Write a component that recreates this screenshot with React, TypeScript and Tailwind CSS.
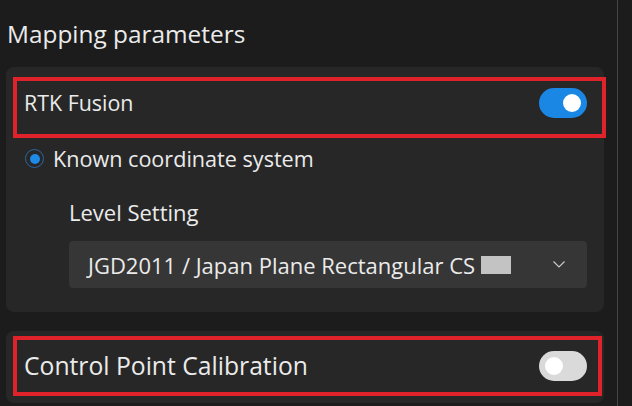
import { useState } from "react";

function Toggle({ on }: { on: boolean }) {
    return (
        <div
            className={`w-[48px] h-[30px] rounded-full flex items-center px-[6px] ${
                on ? "bg-[#1b87e5] justify-end" : "bg-[#dadada] justify-start"
            }`}
        >
            <div className="w-[18px] h-[18px] rounded-full bg-white" />
        </div>
    );
}

function App() {
    const [rtk] = useState(true);
    const [calibration] = useState(false);

    return (
        <div
            className="w-[632px] h-[406px] overflow-hidden bg-[#1c1c1c] text-[#ebebeb]"
            style={{ fontFamily: '"Open Sans", "Noto Sans", sans-serif' }}
        >
            {/* Panel */}
            <div className="w-[618px] h-[430px] -mt-[10px] pt-[10px] border-r border-t border-[#454545] rounded-tr-[12px] pl-[6px]">
                {/* Title */}
                <div className="h-[32px] mt-[17px] pl-[1px] text-[24.4px] leading-[32px]">Mapping parameters</div>

                {/* Card 1 */}
                <div className="mt-[17px] w-[598px] h-[245px] bg-[#272727] rounded-[8px] pt-[10px]">
                    <div className="ml-[7px] w-[593px] h-[61px] border-4 border-[#e0232b] flex items-center justify-between pb-[9px] pl-[7px] pr-[15px]">
                        <span className="text-[21.4px] leading-[30px]">RTK Fusion</span>
                        <Toggle on={rtk} />
                    </div>

                    {/* Radio */}
                    <div className="mt-[6px] h-[29px] flex items-center pl-[19px]">
                        <div className="w-[19px] h-[19px] rounded-full border-[1.5px] border-[#2f6499] flex items-center justify-center">
                            <div className="w-[10px] h-[10px] rounded-full bg-[#1e8ae6]" />
                        </div>
                        <span className="ml-[9px] text-[21.6px] leading-[29px]">Known coordinate system</span>
                    </div>

                    <div className="mt-[24px] h-[30px] pl-[63px] text-[22px] leading-[30px]">Level Setting</div>

                    {/* Dropdown */}
                    <div className="mt-[14px] ml-[63px] w-[518px] h-[47px] bg-[#363636] rounded-[4px] flex items-center justify-between pl-[19px] pr-[22px]">
                        <div className="flex items-center">
                            <span className="text-[22px] leading-[30px]">JGD2011 / Japan Plane Rectangular CS</span>
                            <span className="ml-[6px] w-[30px] h-[18px] bg-[#c3c3c3]" />
                        </div>
                        <svg width="12" height="7" viewBox="0 0 12 7" fill="none">
                            <path d="M0.5 0.5 L6 6 L11.5 0.5" stroke="#c8c8c8" strokeWidth="1.2" />
                        </svg>
                    </div>
                </div>

                {/* Card 2 */}
                <div className="mt-[19px] w-[598px] h-[72px] bg-[#272727] rounded-[8px] pt-[5px]">
                    <div className="ml-[7px] w-[589px] h-[60px] border-4 border-[#e0232b] flex items-center justify-between pl-[7px] pr-[11px]">
                        <span className="text-[24.7px] leading-[32px]">Control Point Calibration</span>
                        <Toggle on={calibration} />
                    </div>
                </div>
            </div>
        </div>
    );
}

export default App;
